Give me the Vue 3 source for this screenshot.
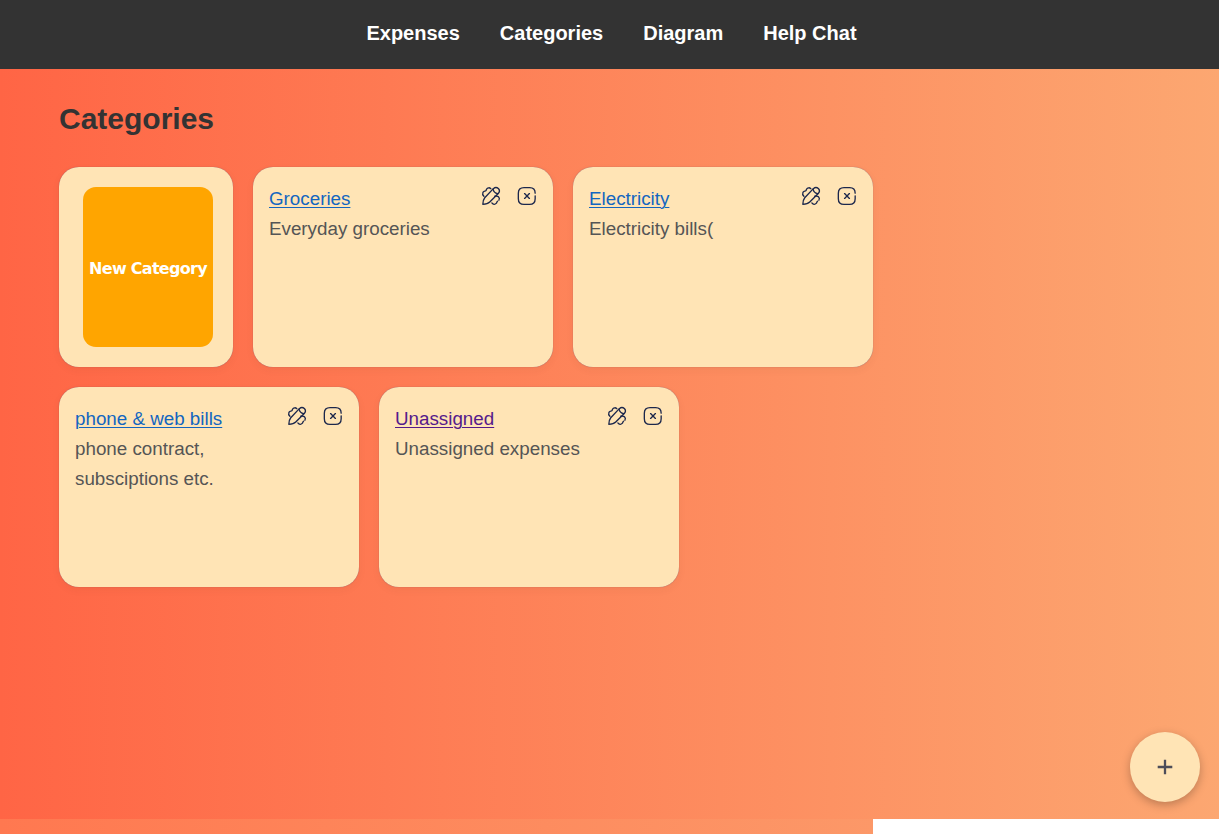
<script setup>
const links = ['Expenses', 'Categories', 'Diagram', 'Help Chat']
const categories = [
  { name: 'Groceries', description: 'Everyday groceries' },
  { name: 'Electricity', description: 'Electricity bills(' },
  { name: 'phone & web bills', description: 'phone contract, subsciptions etc.' },
  { name: 'Unassigned', description: 'Unassigned expenses', visited: true }
]
</script>

<template>
  <div class="page">
    <nav class="navbar">
      <a v-for="link in links" :key="link">{{ link }}</a>
    </nav>
    <main class="content">
      <h1>Categories</h1>
      <div class="cards">
        <section class="card card-new">
          <button class="new-button">New Category</button>
        </section>
        <section v-for="c in categories" :key="c.name" class="card">
          <div class="text">
            <a href="#" :class="{ seen: c.visited }">{{ c.name }}</a>
            <p>{{ c.description }}</p>
          </div>
          <div class="actions">
            <svg viewBox="0 0 24 24">
              <path d="M2.200 22c.1-3.500.7-6 2.300-7.900L14.800 3.200c2-1.700 4.500-1.500 6-.1 1.500 1.500 1.600 4-.1 5.900L10.500 19.300c-2 2-4.600 2.600-8.300 2.700z" />
              <path d="M14.500 3.700c.5 2.800 2.500 4.800 5.500 5.400M11.800 3.200c-1.500-1.500-3.500-1.300-4.700 0-.8.8-.6 2-1.600 2.600-1.300.3-2.500.5-3.200 1.900-.8 1.700-.3 3.100 1.200 4.600M13 20.300c1.700 2.200 3.900 2 5.200.6.800-.9.700-1.900 1.700-2.600M16.500 12.300c1.700-.3 3.500-.5 4.500.6 1.200 1.200 1.300 2.700.5 4.200" />
            </svg>
            <svg viewBox="0 0 24 24">
              <path d="M14.900 9.100l-5.800 5.800m0-5.800l5.800 5.800M21.800 8.600c0-4.800-1.900-6.600-6.600-6.600H8.400C3.600 2 1.600 4 1.600 8.800v6.400c0 4.800 2 6.800 6.800 6.800h6.600c4.800 0 6.800-2 6.800-6.800v-3.400" />
            </svg>
          </div>
        </section>
      </div>
    </main>
    <div class="footer-strip"></div>
    <button class="fab" aria-label="Add"><svg viewBox="0 0 16 16"><path d="M8 .7v14.600M.7 8h14.600" /></svg></button>
  </div>
</template>

<style>
body { margin: 0; background: #fff; overflow: hidden; }
</style>

<style scoped>
.page {
  width: 1219px;
  height: 834px;
  display: flex;
  flex-direction: column;
  position: relative;
  font-family: "Liberation Sans", Arial, sans-serif;
}
.navbar {
  height: 69px;
  box-sizing: border-box;
  padding: 0 0 3px 4px;
  display: flex;
  align-items: center;
  justify-content: center;
  gap: 40px;
  background: #333;
  color: #fff;
  font-size: 20px;
  font-weight: bold;
}
.content {
  height: 750px;
  box-sizing: border-box;
  padding: 30px 0 0 59px;
  background: linear-gradient(to right, #ff6545, #fca771);
}
h1 {
  margin: 0 0 28px;
  color: #333;
  font-size: 30px;
  line-height: 40px;
}
.cards {
  display: flex;
  flex-wrap: wrap;
  gap: 20px;
  width: 860px;
}
.card {
  width: 300px;
  height: 200px;
  box-sizing: border-box;
  padding: 16px;
  display: flex;
  justify-content: space-between;
  border-radius: 20px;
  background: #ffe4b5;
  box-shadow: 0 0 1px rgba(50, 70, 130, .6), 0 3px 8px rgba(60, 50, 40, .05);
}
.card-new {
  width: 174px;
  padding: 20px 20px 20px 24px;
  justify-content: flex-start;
}
.new-button {
  width: 130px;
  height: 160px;
  padding: 2px 0 0;
  border: 0;
  border-radius: 13px;
  background: orange;
  color: #fff;
  font: bold 16px "DejaVu Sans", sans-serif;
  letter-spacing: -.72px;
  white-space: nowrap;
}
.text {
  width: 190px;
  padding-top: 1px;
  color: #555;
  font-size: 18.800px;
  line-height: 30px;
}
.text a { color: #1366c0; text-decoration-thickness: 1px; text-underline-offset: 2px; }
.text a.seen { color: #551a8b; }
.text p { margin: 0; }
.actions { display: flex; gap: 16px; padding-top: 3px; }
.actions svg {
  width: 20px;
  height: 20px;
  fill: none;
  stroke: #1c274c;
  stroke-width: 1.6;
  stroke-linecap: round;
  stroke-linejoin: round;
}
.footer-strip {
  height: 15px;
  width: 873px;
  background: linear-gradient(to right, #ff7850, #fc9868);
}
.fab {
  position: absolute;
  right: 19px;
  bottom: 32px;
  width: 70px;
  height: 70px;
  padding: 0;
  border: 0;
  border-radius: 50%;
  display: grid;
  place-items: center;
  background: #ffe4b5;
  box-shadow: 0 3px 10px rgba(0, 0, 0, .25);
}
.fab svg { width: 16px; height: 16px; fill: none; stroke: #4d4d59; stroke-width: 2.300; }
</style>
